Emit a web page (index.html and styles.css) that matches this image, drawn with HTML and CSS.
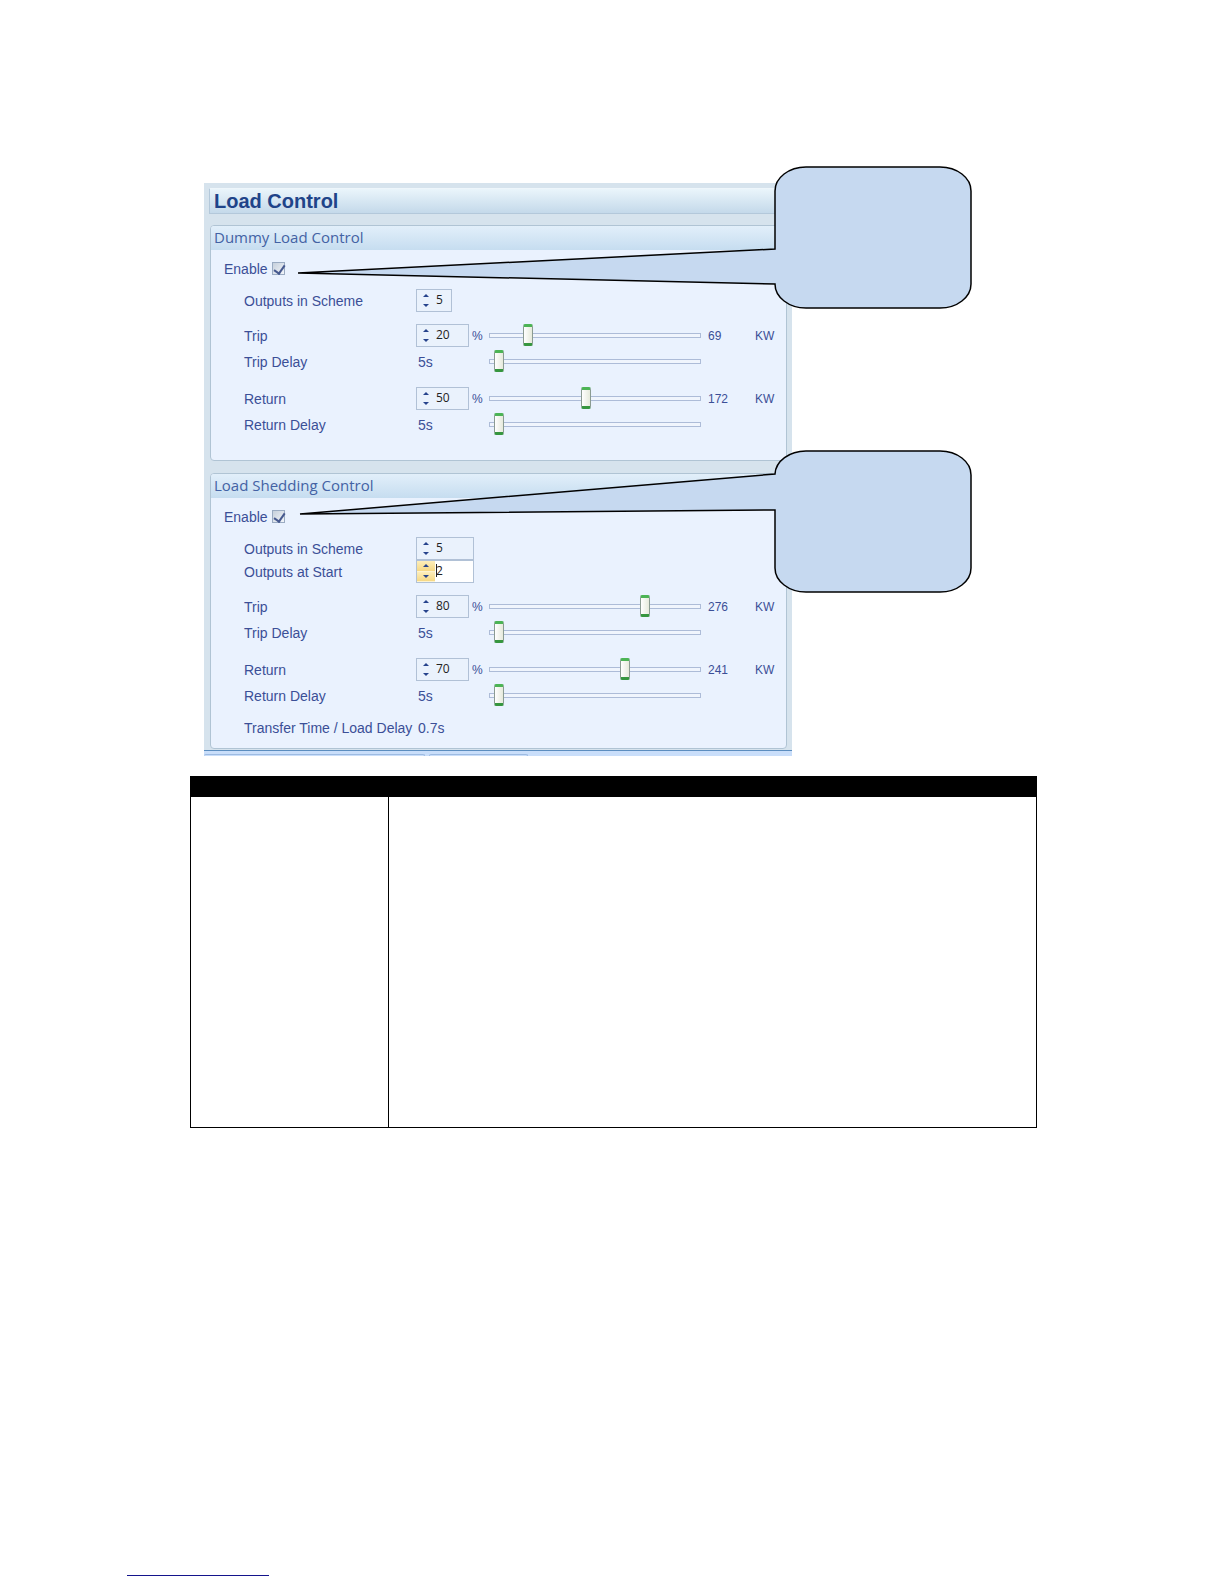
FILE: index.html
```
<!DOCTYPE html>
<html lang="en">
<head>
    <meta charset="UTF-8">
    <meta name="viewport" content="width=device-width, initial-scale=1.0">
    <title>Load Control</title>
    <link rel="stylesheet" href="styles.css">
</head>
<body>
    <main>
        <div class="figure">
            <form class="panel">
                <h1>Load Control</h1>

                <section class="group">
                    <h2>Dummy Load Control</h2>
                    <div class="enable">
                        <label for="dummyEnable">Enable</label>
                        <input type="checkbox" id="dummyEnable" checked>
                    </div>
                    <div class="row">
                        <label for="dummyOutputs">Outputs in Scheme</label>
                        <div class="spin small">
                            <div class="arrows"><button type="button" class="up" aria-label="Increase"></button><button type="button" class="down" aria-label="Decrease"></button></div>
                            <input type="text" id="dummyOutputs" value="5">
                        </div>
                    </div>
                    <div class="row spaced">
                        <label for="dummyTrip">Trip</label>
                        <div class="field">
                            <div class="spin">
                                <div class="arrows"><button type="button" class="up" aria-label="Increase"></button><button type="button" class="down" aria-label="Decrease"></button></div>
                                <input type="text" id="dummyTrip" value="20">
                            </div>
                            <span class="unit">%</span>
                        </div>
                        <input type="range" aria-label="Trip" min="3" max="106" value="20">
                        <span class="power">69</span>
                        <span class="unit">KW</span>
                    </div>
                    <div class="row delay">
                        <label for="dummyTripDelay">Trip Delay</label>
                        <span class="time">5s</span>
                        <input type="range" id="dummyTripDelay" min="0" max="225" value="5">
                    </div>
                    <div class="row spaced">
                        <label for="dummyReturn">Return</label>
                        <div class="field">
                            <div class="spin">
                                <div class="arrows"><button type="button" class="up" aria-label="Increase"></button><button type="button" class="down" aria-label="Decrease"></button></div>
                                <input type="text" id="dummyReturn" value="50">
                            </div>
                            <span class="unit">%</span>
                        </div>
                        <input type="range" aria-label="Return" min="3" max="106" value="50">
                        <span class="power">172</span>
                        <span class="unit">KW</span>
                    </div>
                    <div class="row delay">
                        <label for="dummyReturnDelay">Return Delay</label>
                        <span class="time">5s</span>
                        <input type="range" id="dummyReturnDelay" min="0" max="225" value="5">
                    </div>
                </section>

                <section class="group shedding">
                    <h2>Load Shedding Control</h2>
                    <div class="enable">
                        <label for="shedEnable">Enable</label>
                        <input type="checkbox" id="shedEnable" checked>
                    </div>
                    <div class="row">
                        <label for="shedOutputs">Outputs in Scheme</label>
                        <div class="spin wide">
                            <div class="arrows"><button type="button" class="up" aria-label="Increase"></button><button type="button" class="down" aria-label="Decrease"></button></div>
                            <input type="text" id="shedOutputs" value="5">
                        </div>
                    </div>
                    <div class="row joined">
                        <label for="shedStart">Outputs at Start</label>
                        <div class="spin wide active">
                            <div class="arrows"><button type="button" class="up" aria-label="Increase"></button><button type="button" class="down" aria-label="Decrease"></button></div>
                            <input type="text" id="shedStart" value="2">
                        </div>
                    </div>
                    <div class="row spaced">
                        <label for="shedTrip">Trip</label>
                        <div class="field">
                            <div class="spin">
                                <div class="arrows"><button type="button" class="up" aria-label="Increase"></button><button type="button" class="down" aria-label="Decrease"></button></div>
                                <input type="text" id="shedTrip" value="80">
                            </div>
                            <span class="unit">%</span>
                        </div>
                        <input type="range" aria-label="Trip" min="3" max="106" value="80">
                        <span class="power">276</span>
                        <span class="unit">KW</span>
                    </div>
                    <div class="row delay">
                        <label for="shedTripDelay">Trip Delay</label>
                        <span class="time">5s</span>
                        <input type="range" id="shedTripDelay" min="0" max="225" value="5">
                    </div>
                    <div class="row spaced">
                        <label for="shedReturn">Return</label>
                        <div class="field">
                            <div class="spin">
                                <div class="arrows"><button type="button" class="up" aria-label="Increase"></button><button type="button" class="down" aria-label="Decrease"></button></div>
                                <input type="text" id="shedReturn" value="70">
                            </div>
                            <span class="unit">%</span>
                        </div>
                        <input type="range" aria-label="Return" min="3" max="106" value="70">
                        <span class="power">241</span>
                        <span class="unit">KW</span>
                    </div>
                    <div class="row delay">
                        <label for="shedReturnDelay">Return Delay</label>
                        <span class="time">5s</span>
                        <input type="range" id="shedReturnDelay" min="0" max="225" value="5">
                    </div>
                    <div class="row">
                        <span>Transfer Time / Load Delay</span>
                        <span class="time">0.7s</span>
                    </div>
                </section>

                <div class="tabs">
                    <span class="tab first"></span>
                    <span class="tab"></span>
                </div>
            </form>

            <!-- Callouts pointing at the two Enable boxes -->
            <svg class="callout callout-dummy" width="678" height="144" viewBox="0 0 678 144" aria-hidden="true">
                <path d="M511 2H645A31 24 0 0 1 676 26V119A31 24 0 0 1 645 143H511A31 24 0 0 1 480 119L3 108L480 84V26A31 24 0 0 1 511 2Z"/>
            </svg>
            <svg class="callout callout-shed" width="678" height="144" viewBox="0 0 678 144" aria-hidden="true">
                <path d="M511 2H645A31 24 0 0 1 676 26V119A31 24 0 0 1 645 143H511A31 24 0 0 1 480 119V61L5 65L480 25A31 24 0 0 1 511 2Z"/>
            </svg>
        </div>

        <table>
            <thead>
                <tr><th></th><th></th></tr>
            </thead>
            <tbody>
                <tr><td></td><td></td></tr>
            </tbody>
        </table>
    </main>

    <footer>
        <hr>
    </footer>
</body>
</html>
```
FILE: styles.css
```
* {
    box-sizing: border-box;
}

body {
    margin: 0;
    min-height: 100vh;
    display: flex;
    flex-direction: column;
    background: #fff;
    font-family: "Liberation Sans", Arial, sans-serif;
    font-size: 14px;
    color: #3b4f97;
}

main {
    padding: 183px 187px 0 190px;
}

.figure {
    position: relative;
    margin-bottom: 20px;
}

.panel {
    max-width: 588px;
    margin-left: 14px;
    padding-top: 5px;
    background: #d6e3ed;
}

h1 {
    margin: 0 5px 11px;
    height: 26px;
    padding-left: 4px;
    font-size: 20px;
    line-height: 24px;
    color: #1f4489;
    border: 1px solid #b3c8da;
    border-top-color: #eef6fb;
    background: linear-gradient(#eaf5fb, #c4d9ea);
}

.group {
    margin: 0 5px 12px 6px;
    padding-bottom: 24px;
    border: 1px solid #b0c4d4;
    border-radius: 4px;
    background: #eaf2fe;
}

.group.shedding {
    margin-bottom: 1px;
    padding-bottom: 9px;
}

h2 {
    margin: 0 0 7px;
    height: 24px;
    padding-left: 3px;
    font-family: "Open Sans", "Noto Sans", sans-serif;
    font-size: 15px;
    font-weight: 400;
    line-height: 23px;
    color: #4362a4;
    border-radius: 3px 3px 0 0;
    background: linear-gradient(#e2effa, #c6ddf0);
}

.enable {
    display: flex;
    align-items: center;
    gap: 4px;
    height: 23px;
    padding-left: 13px;
}

input[type="checkbox"] {
    appearance: none;
    position: relative;
    width: 13px;
    height: 13px;
    margin: 0;
    border: 1px solid #9aabc2;
    background: linear-gradient(135deg, #c6d0dc, #f2f5f9);
}

input[type="checkbox"]:checked::after {
    content: "";
    position: absolute;
    left: 3px;
    top: 0;
    width: 5px;
    height: 9px;
    border: solid #46598f;
    border-width: 0 2px 2px 0;
    transform: rotate(35deg);
}

.row {
    display: grid;
    grid-template-columns: 172px 73px 1fr 54px 31px;
    align-items: center;
    height: 23px;
    margin-top: 9px;
    padding-left: 33px;
}

.row.spaced {
    margin-top: 12px;
}

.row.delay {
    margin-top: 3px;
}

.row.delay + .row.spaced {
    margin-top: 14px;
}

.row.joined {
    margin-top: 0;
}

.field {
    display: flex;
    align-items: center;
    gap: 3px;
}

.spin {
    display: flex;
    width: 53px;
    height: 23px;
    border: 1px solid #b1c1d6;
    background: #eaf2fc;
}

.spin.small {
    width: 36px;
}

.spin.wide {
    width: 58px;
}

.arrows {
    display: flex;
    flex-direction: column;
    flex: none;
    width: 18px;
}

.arrows button {
    display: flex;
    align-items: center;
    justify-content: center;
    flex: 1;
    padding: 0;
    border: 0;
    background: none;
}

.arrows button::before {
    content: "";
    border: 3px solid transparent;
}

.arrows .up::before {
    border-top-width: 0;
    border-bottom-color: #26438c;
}

.arrows .down::before {
    border-bottom-width: 0;
    border-top-color: #26438c;
}

.spin input {
    flex: 1;
    min-width: 0;
    padding: 0 0 2px 1px;
    border: 0;
    outline: 0;
    background: none;
    font-family: "Open Sans", "Noto Sans", sans-serif;
    font-size: 12px;
    color: #222;
}

.spin.active {
    background: #fff;
}

.spin.active button {
    border-bottom: 1px solid #fdf3d0;
    background: linear-gradient(#fdeebb, #f6d884);
}

/* text cursor in the field being edited */
.spin.active input {
    background: linear-gradient(#222, #222) 1px 3px / 1px 13px no-repeat;
}

.time {
    padding-left: 2px;
}

.unit,
.power {
    font-size: 12px;
}

.power {
    padding-left: 7px;
}

input[type="range"] {
    appearance: none;
    width: 100%;
    height: 22px;
    margin: 0;
    background: none;
}

input[type="range"]::-webkit-slider-runnable-track {
    height: 5px;
    border: 1px solid #adbcd8;
    background: #f0f5fd;
}

input[type="range"]::-webkit-slider-thumb {
    appearance: none;
    width: 10px;
    height: 22px;
    margin-top: -10px;
    border: 1px solid #8b9b92;
    border-top: 3px solid #4cb455;
    border-bottom: 3px solid #36963f;
    border-radius: 2px;
    background: linear-gradient(90deg, #fff, #e6eadc);
}

.tabs {
    display: flex;
    gap: 4px;
    height: 6px;
    padding-top: 3px;
    border-top: 1px solid #5b8dbf;
    background: #c9defa;
}

.tab {
    width: 99px;
    border: 1px solid #9dbbe2;
    border-bottom: 0;
    border-radius: 4px 4px 0 0;
}

.tab.first {
    width: 221px;
    border-left: 0;
}

.callout {
    position: absolute;
    left: 105px;
    fill: #c6d9f0;
    stroke: #000;
    stroke-width: 1.5;
    pointer-events: none;
}

.callout-dummy {
    top: -18px;
}

.callout-shed {
    top: 266px;
}

table {
    width: 100%;
    border-collapse: collapse;
}

th {
    height: 20px;
    padding: 0;
    border: 1px solid #000;
    background: #000;
}

td {
    height: 331px;
    padding: 0;
    border: 1px solid #000;
}

th:first-child {
    width: 198px;
}

footer {
    margin-top: auto;
    padding: 0 127px 8px;
}

hr {
    width: 142px;
    margin: 0;
    border: 0;
    border-top: 1px solid #14148c;
}
```
